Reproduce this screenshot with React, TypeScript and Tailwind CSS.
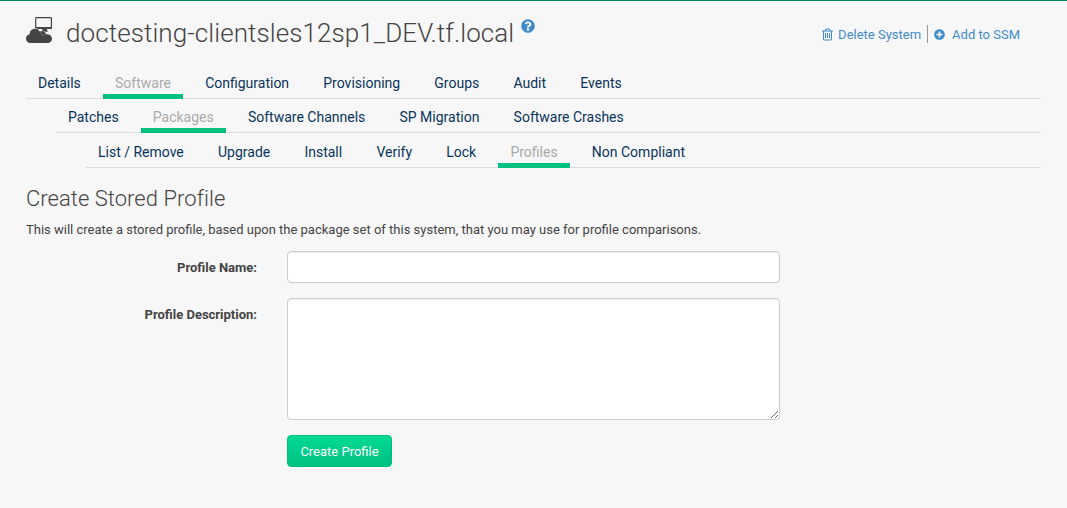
import { FaPlusCircle, FaQuestionCircle } from "react-icons/fa";

type TabRowProps = { tabs: string[]; active: string; className: string };

function TabRow({ tabs, active, className }: TabRowProps) {
  return (
    <ul className={`flex gap-[10.2px] border-b border-[#dddddd] text-[14px] leading-5 ${className}`}>
      {tabs.map((tab) => (
        <li
          key={tab}
          className={
            tab === active
              ? "-mb-px border-b-5 border-[#00c081] px-3 text-[#aaaaaa]"
              : "-mb-px border-b-5 border-transparent px-3 text-[#07345c]"
          }
        >
          <a href="#" className="whitespace-nowrap">{tab}</a>
        </li>
      ))}
    </ul>
  );
}

function SystemIcon() {
  return (
    <svg className="mt-[16px] h-[27px] w-[28px] shrink-0" viewBox="0 0 28 27" fill="none">
      <rect x="9.7" y="0.6" width="15.700" height="10.6" rx="0.8" stroke="#444444" strokeWidth="1.2" />
      <path d="M9.100 10h16.900v1.200q0 .8-.8.8H9.900q-.8 0-.8-.8z" fill="#444444" />
      <path d="M16 12h4.700l1.200 2.700h-5.500z" fill="#444444" />
      <path
        d="M4.600 26C1.900 26 0 24.100 0 21.500c0-2.300 1.500-4 3.700-4.300C3.600 14 5.900 11.700 8.900 11.700c2.300 0 4.200 1.200 5 3.100.7-.5 1.400-.7 2.200-.7 2 0 3.500 1.300 3.800 3.100 3.400-.4 6.100 1.500 6.100 4.500 0 2.500-1.900 4.300-4.500 4.300z"
        fill="#444444"
        stroke="#f7f7f7"
        strokeWidth="1"
        paintOrder="stroke"
      />
      <path d="M13.700 15.100q2.700 1.300 3 4.200M19.900 17.200q-1.700.2-2.700 1.100" stroke="#888888" strokeWidth="0.6" />
    </svg>
  );
}

function TrashIcon() {
  return (
    <svg className="h-[13px] w-[11px]" viewBox="192 64 1408 1664" fill="currentColor">
      <path d="M704 736v576q0 14-9 23t-23 9h-64q-14 0-23-9t-9-23v-576q0-14 9-23t23-9h64q14 0 23 9t9 23zm256 0v576q0 14-9 23t-23 9h-64q-14 0-23-9t-9-23v-576q0-14 9-23t23-9h64q14 0 23 9t9 23zm256 0v576q0 14-9 23t-23 9h-64q-14 0-23-9t-9-23v-576q0-14 9-23t23-9h64q14 0 23 9t9 23zm128 724v-948h-896v948q0 22 7 40.500t14.500 27 10.500 8.500h832q3 0 10.500-8.500t14.500-27 7-40.500zm-672-1076h448l-48-117q-7-9-17-11h-317q-10 2-17 11zm928 32v64q0 14-9 23t-23 9h-96v948q0 83-47 143.500t-113 60.500h-832q-66 0-113-58.500t-47-141.500v-952h-96q-14 0-23-9t-9-23v-64q0-14 9-23t23-9h309l70-167q15-37 54-63t79-26h320q40 0 79 26t54 63l70 167h309q14 0 23 9t9 23z" />
    </svg>
  );
}

export default function App() {
  return (
    <div className="h-[508px] w-full overflow-hidden border-t border-[#00895e] bg-[#f7f7f7] font-[Roboto,sans-serif] text-[13px] text-[#444444]">
      <div className="px-[26px]">
        <header className="flex h-[68px] items-start">
          <SystemIcon />
          <h1 className="ml-[12px] pt-[16px] text-[26px] leading-8 font-light tracking-[0.09px] whitespace-nowrap">
            doctesting-clientsles12sp1_DEV.tf.local
          </h1>
          <FaQuestionCircle className="mt-[18px] ml-[6.500px] size-[14px] shrink-0 text-[#428bca]" />
          <div className="mt-[24px] mr-[21px] ml-auto flex h-[18px] items-center text-[#428bca]">
            <TrashIcon />
            <a href="#" className="ml-[5px] pt-[2px] whitespace-nowrap">Delete System</a>
            <span className="mr-[6px] ml-[6px] h-[18px] w-px bg-[#999999]" />
            <FaPlusCircle className="size-[11px]" />
            <a href="#" className="ml-[7px] pt-[2px] whitespace-nowrap">Add to SSM</a>
          </div>
        </header>

        <nav>
          <TabRow
            className="h-[30px] pt-[4px]"
            active="Software"
            tabs={["Details", "Software", "Configuration", "Provisioning", "Groups", "Audit", "Events"]}
          />
          <TabRow
            className="ml-[30px] h-[34px] pt-[8px]"
            active="Packages"
            tabs={["Patches", "Packages", "Software Channels", "SP Migration", "Software Crashes"]}
          />
          <TabRow
            className="ml-[60px] h-[35px] pt-[9px]"
            active="Profiles"
            tabs={["List / Remove", "Upgrade", "Install", "Verify", "Lock", "Profiles", "Non Compliant"]}
          />
        </nav>

        <h2 className="mt-[18px] text-[22px] leading-[26px] font-light tracking-[0.04px]">Create Stored Profile</h2>
        <p className="mt-[8px] leading-[20px]">
          This will create a stored profile, based upon the package set of this system, that you may use for profile comparisons.
        </p>

        <form className="mt-[11px]" onSubmit={(e) => e.preventDefault()}>
          <div className="flex">
            <label htmlFor="name" className="w-[231px] pt-[7px] text-right leading-[20px] font-bold">Profile Name:</label>
            <input
              id="name"
              className="ml-[30px] h-[32px] w-[493px] rounded-[4px] border border-[#cccccc] bg-white px-3 shadow-[inset_0_1px_1px_rgba(0,0,0,0.075)]"
            />
          </div>
          <div className="mt-[15px] flex">
            <label htmlFor="description" className="w-[231px] pt-[7px] text-right leading-[20px] font-bold">Profile Description:</label>
            <textarea
              id="description"
              className="ml-[30px] h-[122px] w-[493px] rounded-[4px] border border-[#cccccc] bg-white px-3 shadow-[inset_0_1px_1px_rgba(0,0,0,0.075)]"
            />
          </div>
          <button className="mt-[15px] ml-[261px] h-[32px] w-[105px] rounded-[4px] border border-[#00bd7f] bg-linear-to-b from-[#00db93] to-[#00c081] pt-[2px] text-white">
            Create Profile
          </button>
        </form>
      </div>
    </div>
  );
}
